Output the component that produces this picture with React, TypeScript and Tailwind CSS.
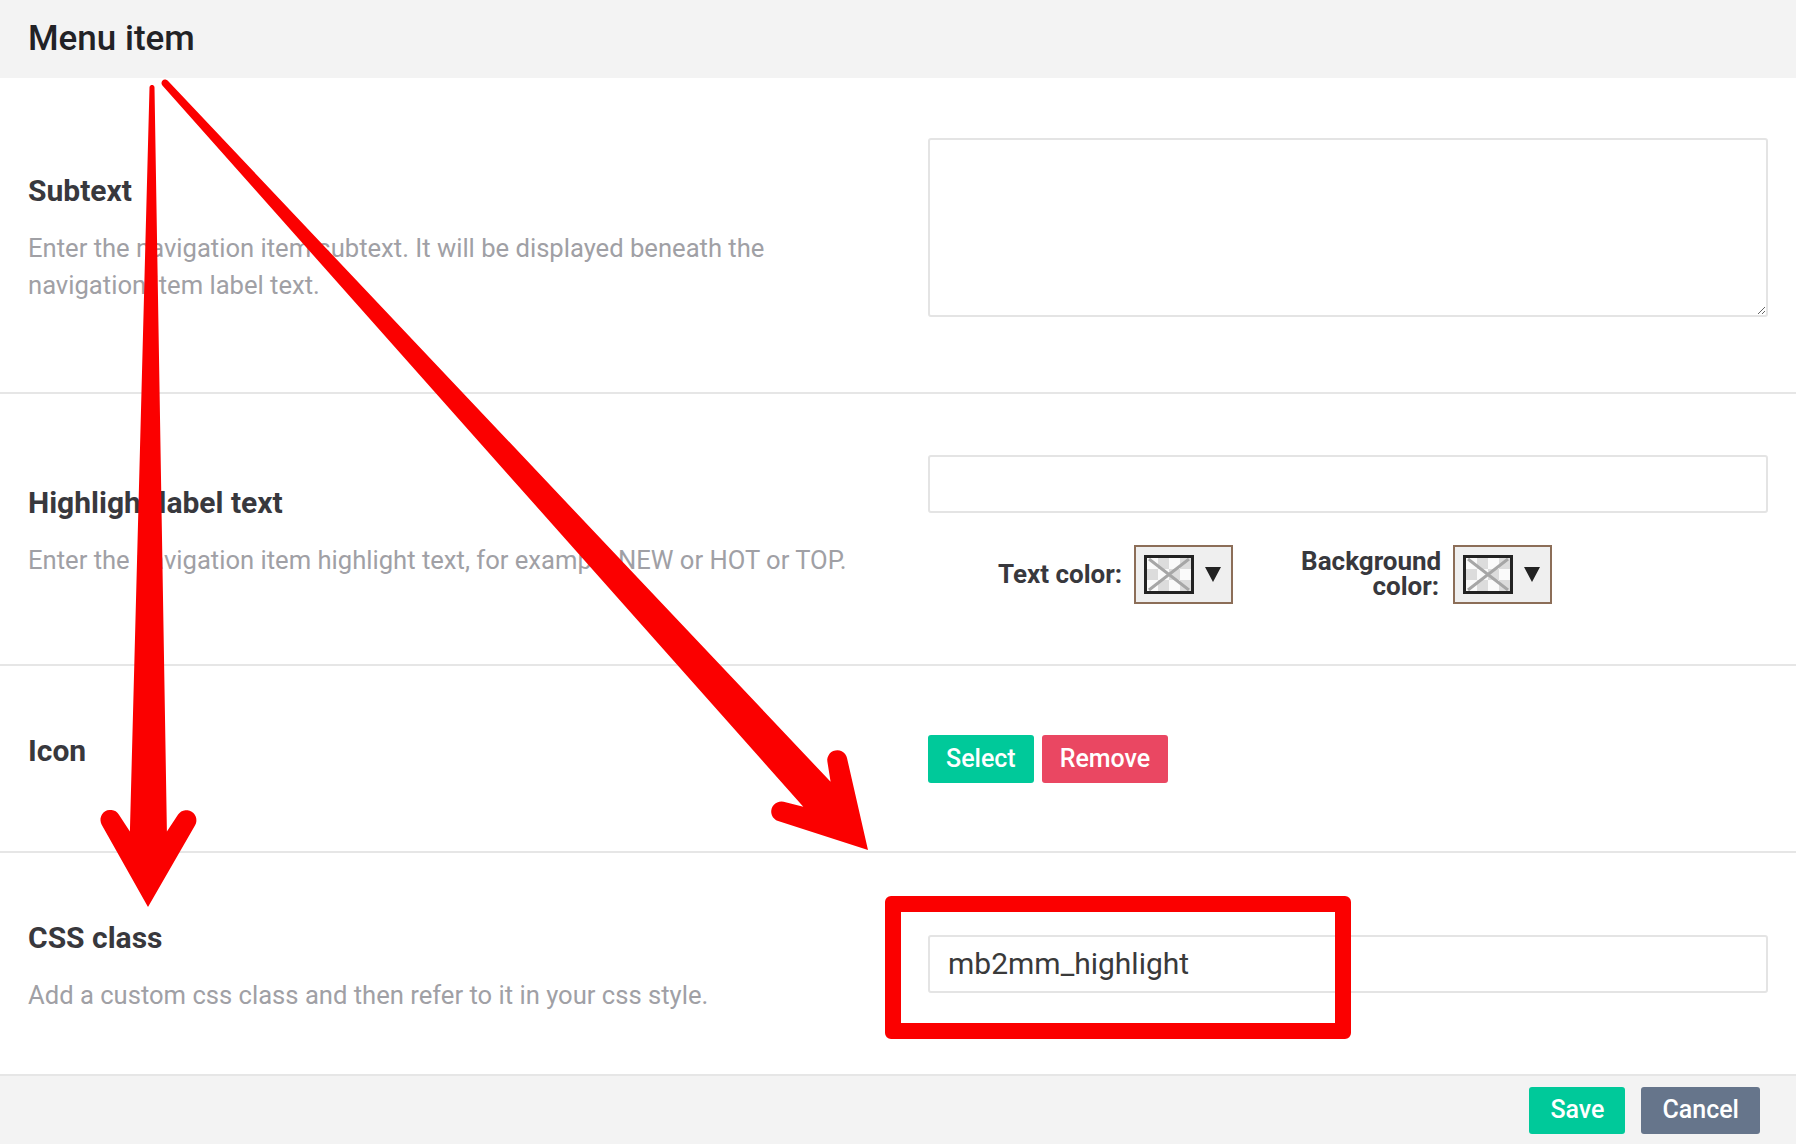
import React from 'react';

type Pt = [number, number];

// arrowhead shape, in px measured back from the tip (a) and sideways (b)
const HEAD = { barbA: 87, barbB: 38, barbR: 10, joinA: 75.5, joinB: 18.5, innerA: 92.5, innerB: 29.65 };

function arrowPoints(start: Pt, tip: Pt, tail: number): string {
  const dx = tip[0] - start[0];
  const dy = tip[1] - start[1];
  const len = Math.hypot(dx, dy);
  const ux = dx / len;
  const uy = dy / len;
  const nx = -uy;
  const ny = ux;
  const { barbA: ca, barbB: cb, barbR: r } = HEAD;

  // tangent from the tip onto the rounded barb
  const d = Math.hypot(ca, cb);
  const ang = Math.atan2(cb, ca) + Math.asin(r / d);
  const t = Math.sqrt(d * d - r * r);
  const outer: Pt = [t * Math.cos(ang), t * Math.sin(ang)];
  const angO = Math.atan2(outer[1] - cb, outer[0] - ca);
  const angI = Math.atan2(HEAD.innerB - cb, HEAD.innerA - ca);

  const side: Pt[] = [];
  for (let i = 0; i <= 14; i++) {
    const th = angO + ((angI - angO) * i) / 14;
    side.push([ca + r * Math.cos(th), cb + r * Math.sin(th)]);
  }
  side.push([HEAD.joinA, HEAD.joinB]);

  const cap: Pt[] = [];
  for (let i = 0; i <= 10; i++) {
    const phi = Math.PI / 2 - (Math.PI * i) / 10;
    cap.push([len + (tail / 2) * Math.cos(phi), (tail / 2) * Math.sin(phi)]);
  }

  const other = [...side].reverse().map(([a, b]) => [a, -b] as Pt);
  const all: Pt[] = [[0, 0], ...side, ...cap, ...other];
  return all
    .map(([a, b]) => `${(tip[0] - ux * a + nx * b).toFixed(1)},${(tip[1] - uy * a + ny * b).toFixed(1)}`)
    .join(' ');
}

function Swatch() {
  const cells = [];
  for (let y = 0; y < 3; y++) {
    for (let x = 0; x < 4; x++) {
      if ((x + y) % 2 === 1) cells.push(<rect key={`${x}-${y}`} x={x * 11} y={y * 11} width="11" height="11" fill="#dcdcdc" />);
    }
  }
  return (
    <svg width="44" height="33" viewBox="0 0 44 33" className="block">
      <rect width="44" height="33" fill="#fafafa" />
      {cells}
      <path d="M2 1 L42 32 M42 1 L2 32" stroke="#a6a6a6" strokeWidth="3" />
    </svg>
  );
}

function ColorPicker() {
  return (
    <div className="flex h-[59px] w-[99px] shrink-0 items-center border-2 border-[#8c6e58] bg-[#efefef] pl-[8px]">
      <div className="h-[39px] w-[50px] border-[3px] border-[#222]">
        <Swatch />
      </div>
      <svg width="16" height="16" viewBox="0 0 16 16" className="ml-[11px]">
        <path d="M0 1 H16 L8 16 Z" fill="#222" />
      </svg>
    </div>
  );
}

function Label({ title, text, className = '' }: { title: string; text?: string; className?: string }) {
  return (
    <div className={className}>
      <div className="text-[30px] font-bold leading-[36px] text-[#38383d]">{title}</div>
      {text && <p className="mt-[21px] text-[25.6px] leading-[37px] text-[#a0a0a5]">{text}</p>}
    </div>
  );
}

export default function App() {
  return (
    <div className="relative h-[1144px] w-full overflow-hidden bg-white font-['Roboto',sans-serif]">
      <header className="flex h-[78px] items-center bg-[#f3f3f3] pl-[28px]">
        <h1 className="text-[35px] font-medium text-[#222226]">Menu item</h1>
      </header>

      <section className="grid h-[316px] grid-cols-2 items-center gap-x-[60px] border-b-2 border-[#e6e6e6] px-[28px]">
        <div className="max-w-[790px] pt-[6px]">
          <Label
            title="Subtext"
            text="Enter the navigation item subtext. It will be displayed beneath the navigation item label text."
          />
        </div>
        <textarea className="mb-[15px] h-[179px] w-full rounded-[3px] border-2 border-[#e4e4e4] outline-none" />
      </section>

      <section className="grid h-[272px] grid-cols-2 items-center gap-x-[60px] border-b-2 border-[#e6e6e6] px-[28px]">
        <div className="whitespace-nowrap pt-[6px]">
          <Label
            title="Highlight label text"
            text="Enter the navigation item highlight text, for example NEW or HOT or TOP."
          />
        </div>
        <div className="flex flex-col">
          <input className="h-[58px] w-full rounded-[3px] border-2 border-[#e4e4e4] outline-none" />
          <div className="mt-[32px] flex items-center pl-[70px] text-[26px] font-bold text-[#38383d]">
            <span className="mr-[12px]">Text color:</span>
            <ColorPicker />
            <span className="ml-[68px] mr-[14px] w-[138px] text-right leading-[25px]">Background color:</span>
            <ColorPicker />
          </div>
        </div>
      </section>

      <section className="grid h-[187px] grid-cols-2 items-center gap-x-[60px] border-b-2 border-[#e6e6e6] px-[28px]">
        <Label title="Icon" className="mb-[16px]" />
        <div className="flex gap-[8px] text-[25px] font-medium text-white">
          <button className="h-[48px] rounded-[3px] bg-[#00c99a] px-[18px]">Select</button>
          <button className="h-[48px] rounded-[3px] bg-[#ea4762] px-[18px]">Remove</button>
        </div>
      </section>

      <section className="grid h-[223px] grid-cols-2 items-center gap-x-[60px] border-b-2 border-[#e6e6e6] px-[28px]">
        <div className="pt-[6px]">
          <Label title="CSS class" text="Add a custom css class and then refer to it in your css style." />
        </div>
        <input
          defaultValue="mb2mm_highlight"
          className="h-[58px] w-full rounded-[3px] border-2 border-[#e4e4e4] px-[18px] text-[30px] text-[#3a3a3a] outline-none"
        />
      </section>

      <footer className="flex h-[68px] items-center justify-end gap-[16px] bg-[#f3f3f3] pr-[36px] text-[25px] font-medium text-white">
        <button className="h-[47px] rounded-[3px] bg-[#00c99a] px-[21px]">Save</button>
        <button className="h-[47px] rounded-[3px] bg-[#66758b] px-[21px]">Cancel</button>
      </footer>

      {/* annotation layer */}
      <svg className="pointer-events-none absolute left-0 top-0" width="1796" height="1144" viewBox="0 0 1796 1144">
        <polygon points={arrowPoints([152, 87.5], [148, 907], 5)} fill="#fb0000" />
        <polygon points={arrowPoints([165, 83], [868, 850], 7)} fill="#fb0000" />
      </svg>
      <div className="pointer-events-none absolute left-[885px] top-[896px] h-[143px] w-[466px] rounded-[6px] border-[16px] border-[#fb0000]" />
    </div>
  );
}
